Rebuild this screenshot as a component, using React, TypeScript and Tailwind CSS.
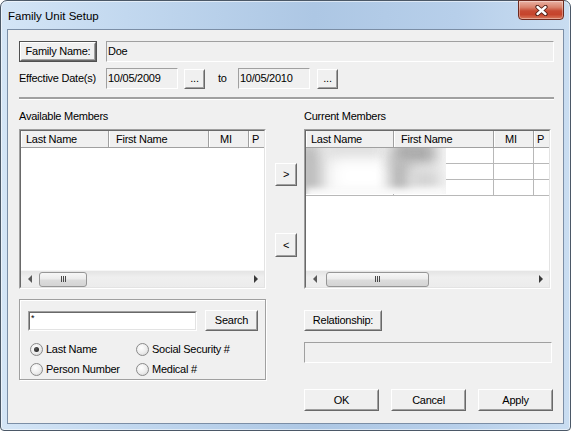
import React from "react";

const T = "text-[11px] leading-[13px] tracking-[-0.25px] text-black";

function Btn({ className = "", children, def = false }: { className?: string; children?: React.ReactNode; def?: boolean }) {
  const inner = (
    <div className="flex flex-1 border border-t-white border-l-white border-r-[#696969] border-b-[#696969] bg-[#f0f0f0]">
      <div className={`flex flex-1 items-center justify-center border border-t-[#f0f0f0] border-l-[#f0f0f0] border-r-[#a0a0a0] border-b-[#a0a0a0] ${T}`}>
        {children}
      </div>
    </div>
  );
  if (def) {
    return <div className={`flex border border-[#505050] ${className}`}>{inner}</div>;
  }
  return <div className={`flex ${className}`}>{inner}</div>;
}

function Field({ className = "", children }: { className?: string; children?: React.ReactNode }) {
  return (
    <div className={`flex items-center border border-t-[#a0a0a0] border-l-[#a0a0a0] border-r-white border-b-white bg-[#f0f0f0] pl-[1px] ${T} ${className}`}>
      {children}
    </div>
  );
}

function Grip() {
  return (
    <div className="flex gap-[1px]">
      <div className="w-[1px] h-[6px] bg-[#4a4a4a]" />
      <div className="w-[1px] h-[6px] bg-[#4a4a4a]" />
      <div className="w-[1px] h-[6px] bg-[#4a4a4a]" />
    </div>
  );
}

function HScroll({ thumbClass }: { thumbClass: string }) {
  return (
    <div className="h-[17px] flex bg-[linear-gradient(to_bottom,#e4e4e4,#efefef_40%,#ececec)] border-t border-t-[#f6f6f6]">
      <div className="w-[17px] flex items-center justify-center">
        <div className="w-0 h-0 border-y-[4px] border-y-transparent border-r-[4px] border-r-[#5a5a5a]" />
      </div>
      <div className="flex-1 flex items-center">
        <div className={`h-[15px] rounded-[3px] border border-[#969696] bg-[linear-gradient(to_bottom,#f7f7f7,#ececec_45%,#dcdcdc_55%,#d4d4d4)] flex items-center justify-center ${thumbClass}`}>
          <Grip />
        </div>
      </div>
      <div className="w-[17px] flex items-center justify-center">
        <div className="w-0 h-0 border-y-[4px] border-y-transparent border-l-[4px] border-l-[#3a3a3a]" />
      </div>
    </div>
  );
}

function Header() {
  const cell = "h-full flex items-center border-r border-r-[#a0a0a0] shadow-[inset_1px_0_0_#ffffff]";
  return (
    <div className={`flex h-[17px] border-b border-b-[#a0a0a0] bg-[#f0f0f0] ${T}`}>
      <div className={`${cell} w-[88px] pl-[5px]`}>Last Name</div>
      <div className={`${cell} w-[100px] pl-[7px]`}>First Name</div>
      <div className={`${cell} w-[40px] pl-[11px]`}>MI</div>
      <div className="h-full flex items-center flex-1 pl-[3px] shadow-[inset_1px_0_0_#ffffff]">P</div>
    </div>
  );
}

function Row() {
  const c = "h-full border-r border-b border-[#b8b8b8]";
  return (
    <div className="flex h-[16px]">
      <div className={`${c} w-[88px]`} />
      <div className={`${c} w-[100px]`} />
      <div className={`${c} w-[40px]`} />
      <div className="h-full flex-1 border-b border-[#b8b8b8]" />
    </div>
  );
}

function ListView({ rows, thumbClass }: { rows: number; thumbClass: string }) {
  return (
    <div className="w-[247px] h-[160px] flex border border-t-[#a0a0a0] border-l-[#a0a0a0] border-r-white border-b-white">
      <div className="flex-1 flex flex-col border border-t-[#696969] border-l-[#696969] border-r-[#e3e3e3] border-b-[#e3e3e3] bg-white overflow-hidden">
        <Header />
        <div className="flex-1 relative bg-white">
          {Array.from({ length: rows }).map((_, i) => (
            <Row key={i} />
          ))}
          {rows > 0 && (
            <div className="absolute left-0 top-0 w-[140px] h-[46px] bg-[#f6f6f6] overflow-hidden">
              <div className="absolute left-[-10px] top-[-6px] w-[26px] h-[60px] bg-[#bdbdbd] blur-[7px]" />
              <div className="absolute left-[18px] top-[-6px] w-[60px] h-[16px] bg-[#dcdcdc] blur-[7px]" />
              <div className="absolute left-[30px] top-[14px] w-[50px] h-[28px] bg-[#ffffff] blur-[7px]" />
              <div className="absolute left-[86px] top-[-6px] w-[44px] h-[22px] bg-[#a6a6a6] blur-[7px]" />
              <div className="absolute left-[84px] top-[10px] w-[20px] h-[44px] bg-[#b4b4b4] blur-[7px]" />
              <div className="absolute left-[104px] top-[22px] w-[30px] h-[20px] bg-[#d0d0d0] blur-[7px]" />
              <div className="absolute left-[0px] top-[40px] w-[140px] h-[12px] bg-[#fafafa] blur-[3px]" />
            </div>
          )}
        </div>
        <HScroll thumbClass={thumbClass} />
      </div>
    </div>
  );
}

function Radio({ checked = false }: { checked?: boolean }) {
  return (
    <div className="w-[13px] h-[13px] rounded-full border border-[#8a8a8a] bg-[radial-gradient(circle_at_40%_35%,#ffffff,#ececec_55%,#cdcdcd)] flex items-center justify-center shrink-0">
      {checked && <div className="w-[5px] h-[5px] rounded-full bg-[radial-gradient(circle_at_40%_35%,#5a5a5a,#111111)]" />}
    </div>
  );
}

export default function App() {
  return (
    <div className="w-[571px] h-[431px] font-['Liberation_Sans',Arial,sans-serif] bg-white">
      <div className="w-full h-full flex flex-col rounded-t-[7px] rounded-b-[4px] border border-[#4b5867] px-[6px] pb-[6px] bg-[linear-gradient(to_right,#d4e5f6_0%,#c2d8ef_22%,#adc7e4_55%,#b7cfea_80%,#c9ddf1_100%)] shadow-[inset_0_0_0_1px_rgba(255,255,255,0.55)]">
        <div className="h-[28px] flex justify-between items-start">
          <div className="pt-[8px] pl-[1px] text-[11.5px] leading-[14px] text-black">Family Unit Setup</div>
          <div className="mt-[-1px] w-[46px] h-[20px] rounded-b-[4px] border border-[#6e2a1f] bg-[linear-gradient(to_bottom,#eab2a4_0%,#d9826c_35%,#c74a33_55%,#c6442c_75%,#d97a5d_100%)] shadow-[inset_0_0_0_1px_rgba(255,255,255,0.35)] flex items-center justify-center">
            <svg width="15" height="11" viewBox="0 0 15 11">
              <path d="M3.5 2 L11.5 9 M11.5 2 L3.5 9" stroke="#4a1a12" strokeWidth="4.2" strokeLinecap="round" />
              <path d="M3.5 2 L11.5 9 M11.5 2 L3.5 9" stroke="#ffffff" strokeWidth="2.4" strokeLinecap="round" />
            </svg>
          </div>
        </div>
        <div className="flex-1 flex flex-col border border-[#7b8ea6] bg-[#f0f0f0] pl-[11px] pr-[9px] pt-[11px]">
          <div className="flex h-[21px]">
            <Btn def className="w-[78px] h-[21px]">Family Name:</Btn>
            <Field className="ml-[9px] flex-1 h-[21px]">Doe</Field>
          </div>
          <div className="flex h-[21px] items-center mt-[6px]">
            <div className={`w-[87px] ${T}`}>Effective Date(s)</div>
            <Field className="w-[72px] h-[21px]">10/05/2009</Field>
            <Btn className="ml-[6px] w-[21px] h-[20px]">...</Btn>
            <div className={`w-[33px] pl-[13px] ${T}`}>to</div>
            <Field className="w-[72px] h-[21px]">10/05/2010</Field>
            <Btn className="ml-[7px] w-[21px] h-[20px]">...</Btn>
          </div>
          <div className="mt-[8px] h-[2px] bg-[#a0a0a0]" />
          <div className="h-[1px] bg-white" />
          <div className="flex">
            <div className="w-[247px] pt-[10px] flex flex-col">
              <div className={T}>Available Members</div>
              <div className="mt-[6px]">
                <ListView rows={0} thumbClass="ml-[1px] w-[48px]" />
              </div>
              <div className="mt-[10px] h-[81px] border border-[#a0a0a0] shadow-[inset_1px_1px_0_#ffffff,1px_1px_0_#ffffff] pl-[8px] pt-[10px] flex flex-col">
                <div className="flex h-[21px] items-center">
                  <div className="w-[169px] h-[20px] flex border border-t-[#a0a0a0] border-l-[#a0a0a0] border-r-white border-b-white">
                    <div className="flex-1 border border-t-[#696969] border-l-[#696969] border-r-[#e3e3e3] border-b-[#e3e3e3] bg-white pl-[1px] text-[9px] leading-[10px] text-black">*</div>
                  </div>
                  <Btn className="ml-[8px] w-[53px] h-[21px]">Search</Btn>
                </div>
                <div className="flex h-[14px] items-center mt-[11px] ml-[2px]">
                  <div className="w-[106px] flex items-center gap-[3px]">
                    <Radio checked />
                    <span className={T}>Last Name</span>
                  </div>
                  <div className="flex items-center gap-[3px]">
                    <Radio />
                    <span className={T}>Social Security #</span>
                  </div>
                </div>
                <div className="flex h-[14px] items-center mt-[6px] ml-[2px]">
                  <div className="w-[106px] flex items-center gap-[3px]">
                    <Radio />
                    <span className={T}>Person Number</span>
                  </div>
                  <div className="flex items-center gap-[3px]">
                    <Radio />
                    <span className={T}>Medical #</span>
                  </div>
                </div>
              </div>
            </div>
            <div className="ml-[9px] w-[22px] pt-[63px] flex flex-col">
              <Btn className="w-[22px] h-[23px]">&gt;</Btn>
              <Btn className="mt-[47px] w-[22px] h-[24px]">&lt;</Btn>
            </div>
            <div className="ml-[7px] w-[249px] pt-[10px] flex flex-col">
              <div className={T}>Current Members</div>
              <div className="mt-[6px]">
                <ListView rows={3} thumbClass="ml-[3px] w-[103px]" />
              </div>
              <Btn className="mt-[21px] w-[78px] h-[21px]">Relationship:</Btn>
              <Field className="mt-[11px] w-[248px] h-[21px]" />
              <div className="flex mt-[26px]">
                <Btn className="w-[75px] h-[22px]">OK</Btn>
                <Btn className="ml-[12px] w-[75px] h-[22px]">Cancel</Btn>
                <Btn className="ml-[12px] w-[75px] h-[22px]">Apply</Btn>
              </div>
            </div>
          </div>
        </div>
      </div>
    </div>
  );
}
